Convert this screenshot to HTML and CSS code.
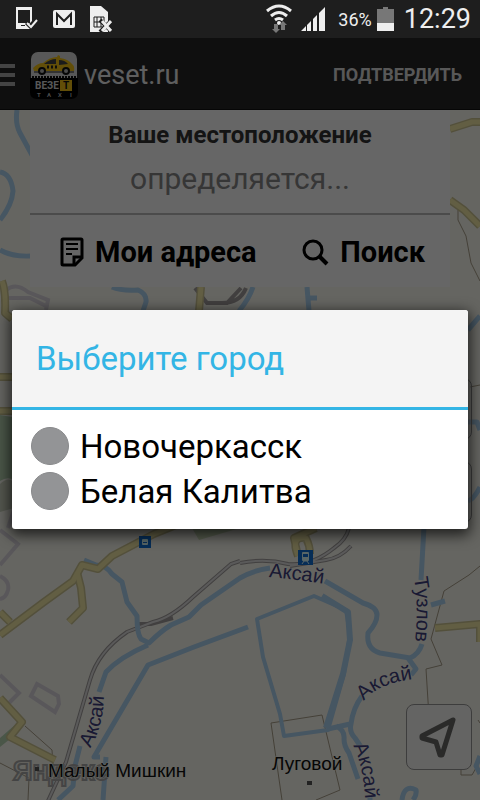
FILE: index.html
```
<!DOCTYPE html>
<html lang="ru">
<head>
    <meta charset="UTF-8">
    <meta name="viewport" content="width=device-width, initial-scale=1.0">
    <title>veset.ru</title>
    <link rel="stylesheet" href="styles.css">
</head>
<body>

<div class="statusbar">
    <div class="notifications">
        <svg width="22" height="24" viewBox="0 0 22 24">
            <path d="M0 0h16v14l-3 3-2-2-2 2 5 5H0z" fill="#eee"/>
            <path d="M2 3h12v13H2zM5 18h4v1H5z" fill="#1e1e1e"/>
            <path d="M11 16l4 4 6-7" fill="none" stroke="#eee" stroke-width="2"/>
        </svg>
        <svg width="22" height="18" viewBox="0 0 22 18">
            <rect width="22" height="18" rx="2" fill="#eee"/>
            <path d="M4 15V4l7 7 7-7v11" fill="none" stroke="#1e1e1e" stroke-width="2"/>
        </svg>
        <svg width="22" height="26" viewBox="0 0 22 26">
            <path d="M0 0h11l7 6v20H0z" fill="#eee"/>
            <path d="M4 11h10v10H4zM7 11v10M11 11v10M4 16h10" fill="none" stroke="#1e1e1e"/>
            <path d="M10 14l12 12M22 14L10 26" stroke="#1e1e1e" stroke-width="4"/>
            <path d="M12 15l9 10M21 15l-9 10" stroke="#eee" stroke-width="3"/>
        </svg>
    </div>
    <div class="system">
        <svg class="wifi" width="26" height="30" viewBox="0 0 26 30">
            <g fill="none" stroke="#eee" stroke-width="3">
                <path d="M1 7q12-10 24 0"/>
                <path d="M5 12q8-7 16 0"/>
                <path d="M9 16q4-3 8 0"/>
            </g>
            <circle cx="13" cy="19" r="2" fill="#eee"/>
            <path d="M8 20h4v5h2l-4 4-4-4h2zM15 26v-5h-2l4-4 4 4h-2v5z" fill="#777"/>
        </svg>
        <svg width="24" height="24" viewBox="0 0 24 24" fill="#eee">
            <path d="M0 24l5-5v5zM6 18l4-4v10H6zM12 12l4-4v16h-4zM18 6l6-6v24h-6z"/>
        </svg>
        <span class="percent">36%</span>
        <svg width="17" height="24" viewBox="0 0 17 24">
            <path d="M6 0h5v2h6v22H0V2h6z" fill="#777"/>
            <path d="M0 16h17v8H0z" fill="#eee"/>
        </svg>
        <span class="clock">12:29</span>
    </div>
</div>

<div class="app">
    <header class="appbar">
        <button class="menu" aria-label="Меню"><span></span><span></span><span></span></button>
        <svg class="logo" width="48" height="48" viewBox="0 0 48 48">
            <rect x="1" y="1" width="46" height="46" rx="7" fill="#ddd"/>
            <path d="M0 27h48v14q0 7-7 7H7q-7 0-7-7z" fill="#000"/>
            <path d="M2 26h44" stroke="#111" stroke-width="2" stroke-dasharray="2 1"/>
            <path d="M3 17q5-5 10-5 7-6 14-6l1-2 2 1v2q8 1 12 6 3 2 2 7H4z" fill="#f4c414"/>
            <path d="M14 13q6-5 12-5v5zM29 9q6 0 9 4l-9 1z" fill="#444"/>
            <path d="M17 16h12" stroke="#222" stroke-width="3" stroke-dasharray="2 2"/>
            <path d="M4 21h40" stroke="#222"/>
            <g fill="#bbb" stroke="#111" stroke-width="2">
                <circle cx="12" cy="20" r="3"/>
                <circle cx="36" cy="20" r="3"/>
            </g>
            <rect x="30" y="29" width="12" height="11" fill="#f4c414"/>
            <text class="logo-name" x="5" y="38">ВЕЗЕ</text>
            <text class="logo-name dark" x="33" y="38">Т</text>
            <g class="logo-sub">
                <text x="7" y="46">T</text>
                <text x="17" y="46">A</text>
                <text x="28" y="46">X</text>
                <text x="40" y="46">I</text>
            </g>
        </svg>
        <h1>veset.ru</h1>
        <button class="confirm">ПОДТВЕРДИТЬ</button>
    </header>

    <main class="map">
        <svg class="canvas" viewBox="0 110 480 690" preserveAspectRatio="xMidYMin slice">
            <!-- green areas -->
            <path d="M0 415l12 2v62q-6-2-12 2z" fill="#b8d8b4"/>
            <path d="M0 484q8-8 14-2v26l-14 4z" fill="#cfd8c4"/>
            <path d="M192 528h48l-41 12z" fill="#cfe0bc"/>
            <path d="M0 738l16-14-6 15-10 8z" fill="#b8d8b4"/>

            <!-- district borders -->
            <g class="edge">
                <path d="M480 566l-11 9-25 16-13 48 11 26-16 4 3 48 16 50 16-5v13h11l8-14"/>
                <path d="M458 210v10l8 16 5 27 9 18"/>
                <path d="M282 800l-11-77 51-8 18 75-24 10"/>
                <path d="M25 726l27 24 1 15M0 763l29 15-1 22"/>
                <path d="M470 387l10-2M478 720l2 3"/>
            </g>

            <!-- suburbs -->
            <g class="suburb">
                <path d="M0 530l18 14-18 21M0 576q10 5 8 14-2 8-8 9M0 675l19 18-14 14M37 684l21 12 1 8-4 8-24-16z"/>
                <path d="M6 290q10-8 22 2l20 8-2 10M8 298l22 0 16 8M8 528l6-18"/>
            </g>

            <!-- railways -->
            <g class="rail">
                <path d="M47 803l19-41 24-82q8-28 37-48l26-10q18-4 40-25l38-33 9-3"/>
                <path d="M135 624h16l22-6M240 563q25-5 48 1 24 2 46-16 12-8 15-20M290 566l36-6q14-2 25-14"/>
                <path d="M195 288l12 15h20l14-15M246 288q-6 15-24 15"/>
            </g>
            <g class="rail-core">
                <path d="M47 803l19-41 24-82q8-28 37-48l26-10q18-4 40-25l38-33 9-3"/>
                <path d="M240 563q25-5 48 1 24 2 46-16 12-8 15-20M290 566l36-6q14-2 25-14"/>
            </g>

            <!-- rivers -->
            <g class="river">
                <path d="M17 110q-2 14 3 23l12 22M0 172q11 2 13 19-1 14-13 29M0 250q12 7 31 6M112 287q9 4 26 3 9 4 8 12l-4 12M253 287q-4 12-14 24M307 287l2 24M309 298h8"/>
                <path d="M84 560l12 5q10 0 16 9l10 8 5 20 10 14q0 18 4 23l8 4q12-12 22-18l18-8 12-12 39-27q14-8 30-10"/>
                <path d="M148 645q-28 12-42 27l-7 20M80 746l-5 20-2 20-15 14M100 757h-6l54-92 46-18 54-20M106 757l-3 43"/>
                <path d="M325 581l38 22q14 4 14 12 0 8-9 18-2 16 12 20l30 5q9-4 12-14M408 658l8 11-5 6M424 527l-3 53M431 605l14-4"/>
                <path d="M362 696q-9 12-11 28-2 8 4 14l6 9M328 729l22-5M336 726q9 4 8 13 0 7 5 14l9 26M370 797v3"/>
                <path d="M402 800q2-16 14-10 1 5-3 10M480 774l-4-8 4-10M468 330l12-14M468 422h9l3 8M468 501q6-2 12-14"/>
            </g>
            <path d="M257 619l57-23 32 14 4 24-6 40-16 56-44 6-4-22-17-57z" class="canal"/>
            <path d="M322 596l26 16 2 28-7 34-17 54" class="canal wide"/>

            <!-- roads -->
            <g class="road-edge">
                <path d="M0 635l44-33 29-21 9-16 16 4 14-13 42-22 22-9"/>
                <path d="M77 572l4 16 2 20-14 14M0 612l10 10M0 698l22 24-12 15 45 23M2 281q4 10 3 32l7 6M0 377h14M0 411h14M201 287l-2 24"/>
                <path d="M450 129l22-7h8M450 200l14 10 16 16M435 628l45-4v18M316 528l-22 10 4 18M298 556q-8-20 8-18 4 8 4 16"/>
            </g>
            <g class="road">
                <path d="M0 635l44-33 29-21 9-16 16 4 14-13 42-22 22-9"/>
                <path d="M77 572l4 16 2 20-14 14M0 612l10 10M0 698l22 24-12 15 45 23M2 281q4 10 3 32l7 6M0 377h14M0 411h14M201 287l-2 24"/>
                <path d="M450 129l22-7h8M450 200l14 10 16 16M435 628l45-4v18M316 528l-22 10 4 18M298 556q-8-20 8-18 4 8 4 16"/>
            </g>

            <!-- stations -->
            <g>
                <rect x="139" y="536" width="12" height="12" fill="#1070d8"/>
                <rect x="142" y="539" width="6" height="6" rx="1" fill="#dff"/>
                <path d="M143 542h4v1h-4z" fill="#1070d8"/>
                <rect x="298" y="550" width="15" height="15" fill="#1070d8"/>
                <rect x="302" y="552" width="7" height="9" rx="1" fill="#dff"/>
                <path d="M303 554h5v3h-5z" fill="#1070d8"/>
                <path d="M302 564l2-3h3l2 3" fill="none" stroke="#dff"/>
            </g>

            <!-- labels -->
            <text class="brand" x="13" y="780">Яндекс</text>
            <path id="p1" d="M90 748q14-22 14-56" fill="none"/>
            <path id="p2" d="M269 577q25 2 70 9" fill="none"/>
            <path id="p3" d="M414 578q6 30-1 80" fill="none"/>
            <path id="p4" d="M364 701q16-20 60-23" fill="none"/>
            <path id="p5" d="M353 746q12 22 13 70" fill="none"/>
            <g class="water-name">
                <text><textPath href="#p1">Аксай</textPath></text>
                <text><textPath href="#p2">Аксай</textPath></text>
                <text><textPath href="#p3">Тузлов</textPath></text>
                <text><textPath href="#p4">Аксай</textPath></text>
                <text><textPath href="#p5">Аксай</textPath></text>
            </g>
            <g class="town">
                <text x="48" y="777">Малый Мишкин</text>
                <text x="272" y="770">Луговой</text>
            </g>
            <path d="M307 781h5v4h-5zM35 767h4v4h-4z" fill="#555"/>
        </svg>

        <section class="location">
            <h2>Ваше местоположение</h2>
            <p>определяется...</p>
            <div class="actions">
                <button>
                    <svg width="24" height="30" viewBox="0 0 24 30" fill="none" stroke="#000">
                        <path d="M3 2h18q1 0 1 1v18l-7 7H3q-1 0-1-1V3q0-1 1-1z" stroke-width="3"/>
                        <path d="M14 28v-8h8" stroke-width="3"/>
                        <path d="M6 7h12M6 12h12M6 17h6" stroke-width="2"/>
                    </svg>
                    Мои адреса
                </button>
                <button>
                    <svg width="28" height="28" viewBox="0 0 28 28" fill="none" stroke="#000" stroke-width="3">
                        <circle cx="12" cy="12" r="9"/>
                        <path d="M18 18l8 8" stroke-width="4"/>
                    </svg>
                    Поиск
                </button>
            </div>
        </section>

        <div class="controls">
            <button class="zoom" aria-label="Приблизить"></button>
            <button class="zoom" aria-label="Отдалить"></button>
            <button class="locate" aria-label="Моё место">
                <svg width="40" height="42" viewBox="0 0 40 42">
                    <path d="M34 4L3 20v2l14 4 4 13h2z" fill="none" stroke="#6a6a68" stroke-width="5" stroke-linejoin="round"/>
                </svg>
            </button>
        </div>
    </main>

    <div class="overlay">
        <form class="dialog">
            <h2 id="dialog-title">Выберите город</h2>
            <div class="cities" role="radiogroup" aria-labelledby="dialog-title">
                <label><input type="radio" name="city" value="novocherkassk">Новочеркасск</label>
                <label><input type="radio" name="city" value="kalitva">Белая Калитва</label>
            </div>
        </form>
    </div>
</div>

</body>
</html>
```
FILE: styles.css
```
* {
    box-sizing: border-box;
}

body {
    margin: 0;
    min-height: 100vh;
    display: flex;
    flex-direction: column;
    font-family: Roboto, "Noto Sans", sans-serif;
    background-color: #000;
}

h1, h2, p {
    margin: 0;
    font-weight: 400;
}

button {
    border: none;
    padding: 0;
    background: none;
    font-family: inherit;
    cursor: pointer;
}

svg {
    display: block;
    flex-shrink: 0;
}

/* status bar */
.statusbar {
    height: 38px;
    padding: 0 9px 0 16px;
    display: flex;
    justify-content: space-between;
    align-items: center;
    background-color: #1e1e1e;
    color: #eee;
}

.notifications {
    display: flex;
    align-items: center;
    gap: 15px;
}

.system {
    display: flex;
    align-items: center;
}

.wifi {
    margin-right: 9px;
}

.percent {
    margin: 0 5px 0 13px;
    font-size: 18px;
}

.clock {
    margin-left: 10px;
    font-size: 27px;
}

/* app */
.app {
    position: relative;
    flex: 1;
    display: flex;
    flex-direction: column;
}

.appbar {
    height: 72px;
    padding: 2px 18px 0 0;
    display: flex;
    align-items: center;
    background-color: #262626;
    border-bottom: 1px solid #111;
}

.menu {
    width: 15px;
    margin-right: 15px;
    display: flex;
    flex-direction: column;
    gap: 5px;
}

.menu span {
    width: 100%;
    height: 4px;
    background-color: #aaa;
}

.logo-name {
    font-size: 10px;
    font-weight: 700;
    fill: #ddd;
}

.dark {
    fill: #111;
}

.logo-sub {
    font-size: 6px;
    font-weight: 700;
    fill: #bbb;
}

.appbar h1 {
    margin-left: 6px;
    flex: 1;
    font-size: 27px;
    color: #eee;
}

.confirm {
    font-size: 18px;
    font-weight: 700;
    color: #ddd;
}

/* map */
.map {
    position: relative;
    flex: 1;
    padding: 0 30px;
    background-color: #fdfcf2;
    overflow: hidden;
}

.canvas {
    position: absolute;
    inset: 0;
    width: 100%;
    height: 100%;
}

.edge {
    fill: none;
    stroke: #aba18c;
}

.suburb {
    fill: none;
    stroke: #dedae2;
    stroke-width: 4px;
}

.rail {
    fill: none;
    stroke: #a29f9f;
    stroke-width: 4px;
}

.rail-core {
    fill: none;
    stroke: #e2e0e0;
    stroke-width: 2px;
}

.river, .canal {
    fill: none;
    stroke: #afd6f4;
    stroke-width: 5px;
    stroke-linejoin: round;
}

.canal {
    stroke-width: 4px;
}

.wide {
    stroke-width: 6px;
}

.road-edge, .road {
    fill: none;
    stroke: #d0c894;
    stroke-width: 8px;
    stroke-linejoin: round;
}

.road {
    stroke: #f4eaa8;
    stroke-width: 5px;
}

.water-name, .town {
    font-family: "Liberation Sans", Arial, sans-serif;
    font-size: 20px;
    fill: #404080;
    paint-order: stroke;
    stroke: #fdfcf2;
    stroke-width: 1px;
}

.town {
    font-size: 19px;
    fill: #111;
}

.brand {
    font-family: "Liberation Sans", sans-serif;
    font-size: 27px;
    font-weight: 700;
    fill: #ebe9df;
    fill-opacity: 0.5;
    stroke: #aaa;
    stroke-width: 2px;
}

.location {
    position: relative;
    background-color: #fff;
    text-align: center;
}

.location h2 {
    padding-top: 9px;
    font-size: 24px;
    line-height: 32px;
    font-weight: 700;
    color: #333;
}

.location p {
    height: 64px;
    font-size: 30px;
    line-height: 56px;
    color: #888;
    border-bottom: 2px solid #bbb;
}

.actions {
    height: 72px;
    padding: 2px 25px 0 30px;
    display: flex;
    justify-content: space-between;
    align-items: center;
}

.actions button {
    display: flex;
    align-items: center;
    gap: 11px;
    font-size: 29px;
    font-weight: 700;
    color: #000;
}

.controls {
    position: absolute;
    right: 8px;
    bottom: 30px;
    display: flex;
    flex-direction: column;
    gap: 21px;
}

.controls button {
    width: 66px;
    height: 62px;
    border: 1px solid #999;
    border-radius: 8px;
    background-color: rgba(255, 255, 255, 0.3);
}

.controls .locate {
    height: 66px;
    margin-top: 160px;
    display: flex;
    justify-content: center;
    align-items: center;
    background-color: #fafaf8;
}

/* dialog */
.overlay {
    position: absolute;
    inset: 0;
    padding: 0 12px;
    display: flex;
    flex-direction: column;
    justify-content: center;
    background-color: rgba(0, 0, 0, 0.6);
}

.dialog {
    background-color: #fff;
    border-radius: 3px;
    box-shadow: 0 4px 14px 2px rgba(0, 0, 0, 0.7);
    overflow: hidden;
}

.dialog h2 {
    padding: 0 24px;
    font-size: 33px;
    line-height: 97px;
    color: #33b5e5;
    background-color: #f4f4f4;
    border-bottom: 3px solid #33b5e5;
}

.cities {
    padding: 14px 19px 15px;
}

.cities label {
    height: 45px;
    display: flex;
    align-items: center;
    gap: 11px;
    font-size: 33px;
    color: #000;
    cursor: pointer;
}

.cities input {
    appearance: none;
    width: 38px;
    height: 38px;
    margin: 0;
    border: 1px solid #88898b;
    border-radius: 50%;
    background-color: #939496;
}

.cities input:checked {
    border: 10px solid #939496;
    background-color: #33b5e5;
}
```
